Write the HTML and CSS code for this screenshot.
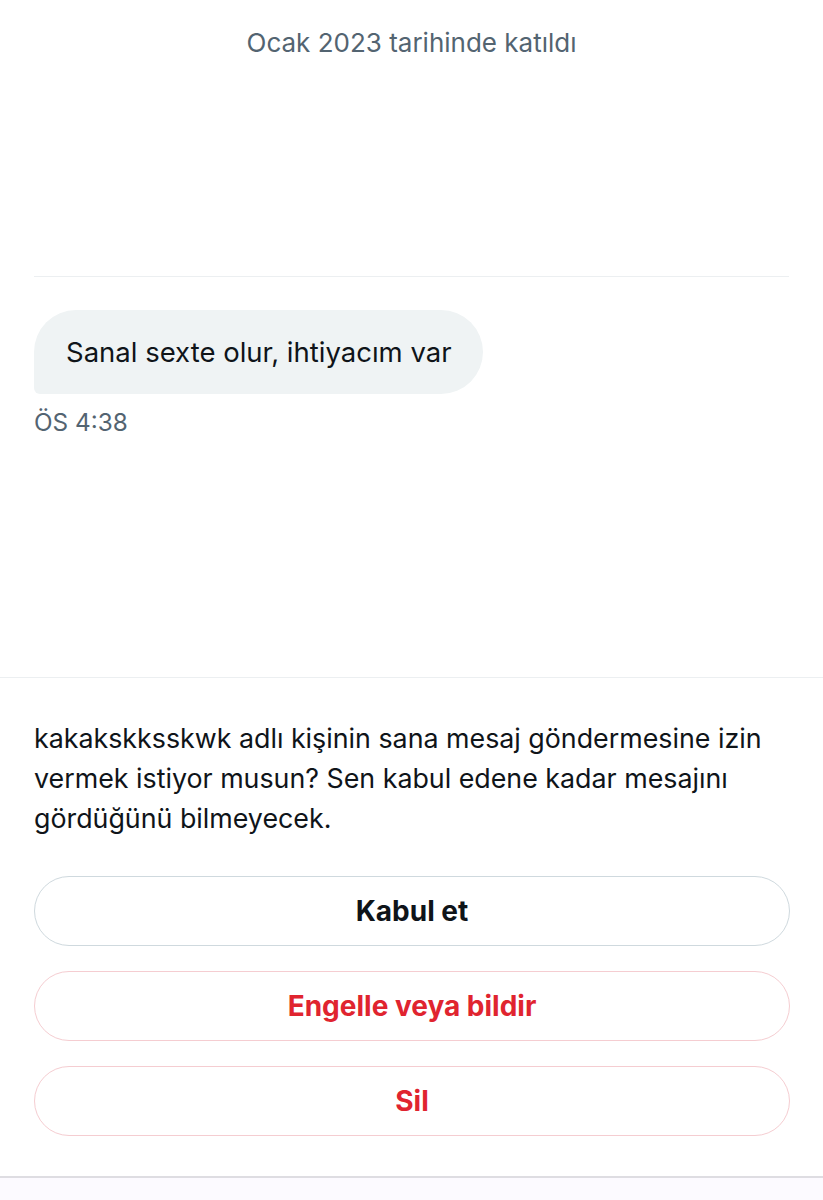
FILE: index.html
```html
<!DOCTYPE html>
<html lang="tr">
<head>
<meta charset="utf-8">
<link rel="stylesheet" href="styles.css">
</head>
<body>
<div class="page">
  <section class="profile">
    <p class="joined">Ocak 2023 tarihinde katıldı</p>
  </section>
  <div class="divider"></div>
  <section class="thread">
    <div class="bubble">Sanal sexte olur, ihtiyacım var</div>
    <div class="time">ÖS 4:38</div>
  </section>
  <section class="request">
    <p class="notice">kakakskksskwk adlı kişinin sana mesaj göndermesine izin vermek istiyor musun? Sen kabul edene kadar mesajını gördüğünü bilmeyecek.</p>
    <div class="actions">
      <button class="btn btn-accept">Kabul et</button>
      <button class="btn btn-danger">Engelle veya bildir</button>
      <button class="btn btn-danger">Sil</button>
    </div>
  </section>
  <div class="navbar"></div>
</div>
</body>
</html>
```
FILE: styles.css
```css
* { box-sizing: border-box; }
html, body { margin: 0; padding: 0; background: #fff; }
body {
  font-family: Inter, Roboto, "Noto Sans", sans-serif;
  color: #0f1419;
  width: 823px;
  height: 1200px;
  overflow: hidden;
}
.page {
  display: flex;
  flex-direction: column;
  height: 1200px;
}
.profile {
  height: 276px;
  display: flex;
  justify-content: center;
}
.joined {
  margin: 27px 0 0;
  font-size: 26px;
  line-height: 32px;
  color: #536471;
}
.divider {
  height: 1px;
  background: #eceff1;
  margin: 0 34px;
}
.thread {
  height: 401px;
  padding: 33px 34px 0;
  border-bottom: 1px solid #eceff1;
}
.bubble {
  display: inline-block;
  background: #eff3f4;
  border-radius: 42px 42px 42px 6px;
  height: 84px;
  padding: 0 31px 0 32px;
  font-size: 27.5px;
  line-height: 84px;
  color: #0f1419;
}
.time {
  margin-top: 13px;
  font-size: 24.3px;
  line-height: 30px;
  color: #536471;
}
.request {
  flex: 1;
  padding: 40px 34px 0 34px;
}
.notice {
  margin: 0;
  font-size: 26.8px;
  line-height: 40px;
  color: #0f1419;
}
.actions {
  margin-top: 38px;
  display: flex;
  flex-direction: column;
  gap: 25px;
}
.btn {
  width: 756px;
  height: 70px;
  border-radius: 35px;
  background: #fff;
  font-family: Inter, Roboto, "Noto Sans", sans-serif;
  font-size: 28px;
  font-weight: 700;
  cursor: pointer;
}
.btn-accept {
  border: 1.5px solid #cfd9de;
  color: #0f1419;
}
.btn-danger {
  border: 1.5px solid #f5cdd1;
  color: #e0242f;
}
.navbar {
  height: 24px;
  background: #fcfaff;
  border-top: 2px solid #dedde2;
}
```
